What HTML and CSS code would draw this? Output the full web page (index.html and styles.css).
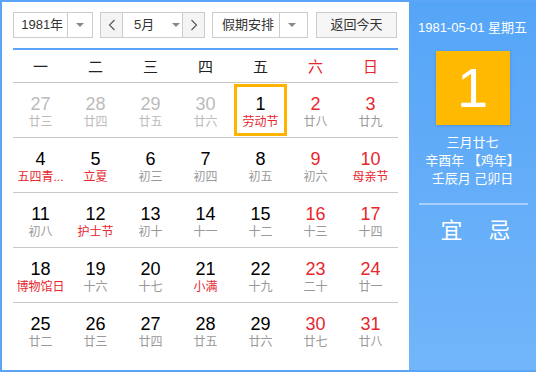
FILE: index.html
```html
<!DOCTYPE html>
<html>
<head>
  <meta charset="utf-8">
  <title>万年历</title>
  <link rel="stylesheet" href="styles.css">
</head>
<body>
  <div class="calendar">
    <div class="main">
      <div class="toolbar">
        <div class="select year">
          <span class="select-text">1981年</span>
          <span class="select-arrow"><i class="caret"></i></span>
        </div>
        <div class="month-group">
          <span class="nav-btn">
            <svg width="8" height="12" viewBox="0 0 8 12"><polyline points="6.5,1 1.5,6 6.5,11" fill="none" stroke="#555" stroke-width="1.1"/></svg>
          </span>
          <span class="month-text">5月<i class="caret"></i></span>
          <span class="nav-btn">
            <svg width="8" height="12" viewBox="0 0 8 12"><polyline points="1.5,1 6.5,6 1.5,11" fill="none" stroke="#555" stroke-width="1.1"/></svg>
          </span>
        </div>
        <div class="select holiday">
          <span class="select-text">假期安排</span>
          <span class="select-arrow"><i class="caret"></i></span>
        </div>
        <div class="today-btn">返回今天</div>
      </div>

      <div class="weekdays">
        <span>一</span><span>二</span><span>三</span><span>四</span><span>五</span><span class="red">六</span><span class="red">日</span>
      </div>

      <div class="week">
        <div class="cell other"><b>27</b><em>廿三</em></div>
        <div class="cell other"><b>28</b><em>廿四</em></div>
        <div class="cell other"><b>29</b><em>廿五</em></div>
        <div class="cell other"><b>30</b><em>廿六</em></div>
        <div class="cell today"><b>1</b><em class="fest">劳动节</em></div>
        <div class="cell weekend"><b>2</b><em>廿八</em></div>
        <div class="cell weekend"><b>3</b><em>廿九</em></div>
      </div>
      <div class="week">
        <div class="cell"><b>4</b><em class="fest">五四青...</em></div>
        <div class="cell"><b>5</b><em class="fest">立夏</em></div>
        <div class="cell"><b>6</b><em>初三</em></div>
        <div class="cell"><b>7</b><em>初四</em></div>
        <div class="cell"><b>8</b><em>初五</em></div>
        <div class="cell weekend"><b>9</b><em>初六</em></div>
        <div class="cell weekend"><b>10</b><em class="fest">母亲节</em></div>
      </div>
      <div class="week">
        <div class="cell"><b>11</b><em>初八</em></div>
        <div class="cell"><b>12</b><em class="fest">护士节</em></div>
        <div class="cell"><b>13</b><em>初十</em></div>
        <div class="cell"><b>14</b><em>十一</em></div>
        <div class="cell"><b>15</b><em>十二</em></div>
        <div class="cell weekend"><b>16</b><em>十三</em></div>
        <div class="cell weekend"><b>17</b><em>十四</em></div>
      </div>
      <div class="week">
        <div class="cell"><b>18</b><em class="fest">博物馆日</em></div>
        <div class="cell"><b>19</b><em>十六</em></div>
        <div class="cell"><b>20</b><em>十七</em></div>
        <div class="cell"><b>21</b><em class="fest">小满</em></div>
        <div class="cell"><b>22</b><em>十九</em></div>
        <div class="cell weekend"><b>23</b><em>二十</em></div>
        <div class="cell weekend"><b>24</b><em>廿一</em></div>
      </div>
      <div class="week last">
        <div class="cell"><b>25</b><em>廿二</em></div>
        <div class="cell"><b>26</b><em>廿三</em></div>
        <div class="cell"><b>27</b><em>廿四</em></div>
        <div class="cell"><b>28</b><em>廿五</em></div>
        <div class="cell"><b>29</b><em>廿六</em></div>
        <div class="cell weekend"><b>30</b><em>廿七</em></div>
        <div class="cell weekend"><b>31</b><em>廿八</em></div>
      </div>
    </div>

    <div class="side">
      <div class="side-date">1981-05-01 星期五</div>
      <div class="big-day">1</div>
      <div class="lunar">
        <div>三月廿七</div>
        <div>辛酉年 【鸡年】</div>
        <div>壬辰月 己卯日</div>
      </div>
      <div class="yiji">
        <span>宜</span><span>忌</span>
      </div>
    </div>
  </div>
</body>
</html>
```

FILE: styles.css
```css
* { box-sizing: border-box; }
body {
  margin: 0;
  font-family: "Liberation Sans", Arial, "Noto Sans CJK SC", sans-serif;
  background: #fff;
}
.calendar {
  display: flex;
  width: 536px;
  height: 372px;
  border: 2px solid #5aa5f6;
  border-right: none;
}
.main {
  width: 407px;
  padding: 10px 11px 0 11px;
  background: #fff;
}

/* toolbar */
.toolbar {
  display: flex;
  height: 26px;
  font-size: 13px;
  color: #333;
  margin-bottom: 10px;
}
.select, .month-group, .today-btn {
  display: flex;
  border: 1px solid #ccc;
  height: 26px;
  line-height: 24px;
}
.select-text { text-align: center; }
.select-arrow {
  display: flex;
  align-items: center;
  justify-content: center;
  border-left: 1px solid #ccc;
  width: 25px;
}
.caret {
  display: inline-block;
  width: 0;
  height: 0;
  border-left: 4px solid transparent;
  border-right: 4px solid transparent;
  border-top: 4px solid #888;
}
.year { width: 80px; }
.year .select-text { width: 54px; padding-left: 3px; }
.month-group { width: 105px; margin-left: 7px; }
.nav-btn {
  width: 22px;
  display: flex;
  align-items: center;
  justify-content: center;
  background: #f4f4f4;
}
.nav-btn:first-child { border-right: 1px solid #ccc; }
.nav-btn:last-child { border-left: 1px solid #ccc; }
.month-text {
  flex: 1;
  display: flex;
  align-items: center;
  padding-left: 11px;
  gap: 18px;
}
.holiday { width: 96px; margin-left: 7px; }
.holiday .select-text { width: 66px; padding-left: 4px; }
.today-btn {
  width: 81px;
  margin-left: 8px;
  justify-content: center;
  background: #f6f6f6;
}

/* grid */
.weekdays {
  display: grid;
  grid-template-columns: repeat(7, 55px);
  border-top: 2px solid #5aa5f6;
  border-bottom: 1px solid #c8c8c8;
  height: 35px;
  line-height: 32px;
  font-size: 15px;
  color: #222;
  text-align: center;
  font-family: "Noto Sans CJK SC", sans-serif;
}
.red { color: #e8262d; }
.week {
  display: grid;
  grid-template-columns: repeat(7, 55px);
  height: 55px;
  border-bottom: 1px solid #c8c8c8;
}
.week.last { border-bottom: none; }
.cell {
  text-align: center;
  padding-top: 11px;
}
.cell b {
  display: block;
  font-weight: normal;
  font-size: 18px;
  line-height: 20px;
  color: #000;
}
.cell em {
  display: block;
  font-style: normal;
  font-size: 12px;
  line-height: 17px;
  color: #999;
  white-space: nowrap;
}
.cell em.fest { color: #e8262d; }
.cell.weekend b { color: #e8262d; }
.cell.other b { color: #bbb; }
.cell.other em { color: #bbb; }
.cell.today {
  outline: 3px solid #ffb500;
  outline-offset: -4px;
}

/* side panel */
.side {
  flex: 1;
  background: linear-gradient(#55a5f7, #72b5fa);
  color: #fff;
  text-align: center;
  padding-top: 17px;
}
.side-date {
  font-size: 13px;
  line-height: 18px;
}
.big-day {
  width: 74px;
  height: 74px;
  margin: 14px auto 0;
  background: #ffb900;
  font-size: 56px;
  line-height: 74px;
  box-shadow: 0 1px 3px rgba(0,0,0,0.15);
}
.lunar {
  margin-top: 9px;
  font-size: 13px;
  line-height: 18px;
}
.yiji {
  margin: 15px 8px 0 10px;
  border-top: 2px solid #a8d0fa;
  padding: 9px 0 0 4px;
  display: flex;
  justify-content: center;
  gap: 26px;
  font-size: 22px;
  line-height: 28px;
  font-family: "Noto Sans CJK SC", sans-serif;
}
```
